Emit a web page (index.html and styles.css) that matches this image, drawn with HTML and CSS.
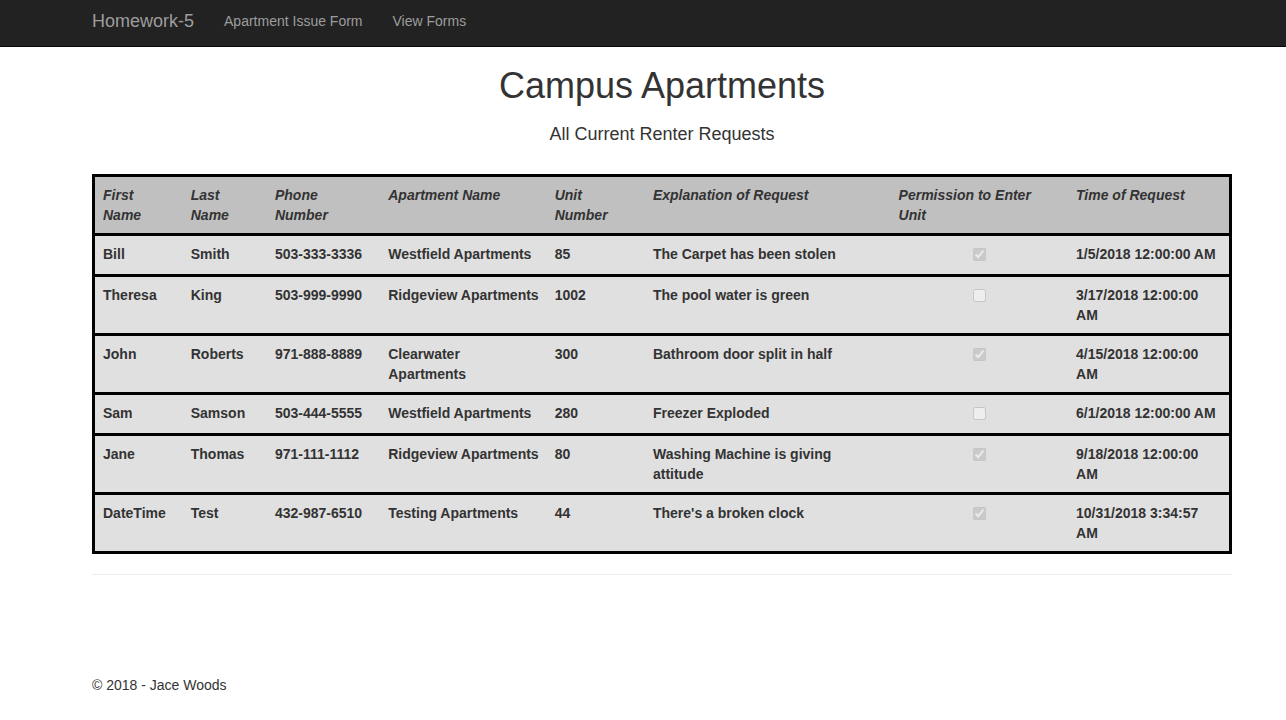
FILE: index.html
```html
<!DOCTYPE html>
<html>
<head>
<meta charset="utf-8">
<title>Campus Apartments</title>
<link rel="stylesheet" href="styles.css">
</head>
<body>
<nav class="navbar">
  <div class="container nav-inner">
    <a class="brand" href="#">Homework-5</a>
    <ul class="nav-links">
      <li><a href="#">Apartment Issue Form</a></li>
      <li><a href="#">View Forms</a></li>
    </ul>
  </div>
</nav>
<main class="container body-content">
  <h1 class="title">Campus Apartments</h1>
  <h4 class="subtitle">All Current Renter Requests</h4>
  <table class="requests">
    <colgroup>
      <col class="c1"><col class="c2"><col class="c3"><col class="c4"><col class="c5"><col class="c6"><col class="c7"><col class="c8">
    </colgroup>
    <thead>
      <tr>
        <th>First Name</th><th>Last Name</th><th>Phone Number</th><th>Apartment Name</th><th>Unit Number</th><th>Explanation of Request</th><th>Permission to Enter Unit</th><th>Time of Request</th>
      </tr>
    </thead>
    <tbody>
      <tr><td>Bill</td><td>Smith</td><td>503-333-3336</td><td>Westfield Apartments</td><td>85</td><td>The Carpet has been stolen</td><td class="chk"><input type="checkbox" checked disabled></td><td>1/5/2018 12:00:00 AM</td></tr>
      <tr><td>Theresa</td><td>King</td><td>503-999-9990</td><td>Ridgeview Apartments</td><td>1002</td><td>The pool water is green</td><td class="chk"><input type="checkbox" disabled></td><td>3/17/2018 12:00:00 AM</td></tr>
      <tr><td>John</td><td>Roberts</td><td>971-888-8889</td><td>Clearwater Apartments</td><td>300</td><td>Bathroom door split in half</td><td class="chk"><input type="checkbox" checked disabled></td><td>4/15/2018 12:00:00 AM</td></tr>
      <tr><td>Sam</td><td>Samson</td><td>503-444-5555</td><td>Westfield Apartments</td><td>280</td><td>Freezer Exploded</td><td class="chk"><input type="checkbox" disabled></td><td>6/1/2018 12:00:00 AM</td></tr>
      <tr><td>Jane</td><td>Thomas</td><td>971-111-1112</td><td>Ridgeview Apartments</td><td>80</td><td>Washing Machine is giving attitude</td><td class="chk"><input type="checkbox" checked disabled></td><td>9/18/2018 12:00:00 AM</td></tr>
      <tr><td>DateTime</td><td>Test</td><td>432-987-6510</td><td>Testing Apartments</td><td>44</td><td>There's a broken clock</td><td class="chk"><input type="checkbox" checked disabled></td><td>10/31/2018 3:34:57 AM</td></tr>
    </tbody>
  </table>
  <hr class="rule">
  <footer class="footer">
    <p>&copy; 2018 - Jace Woods</p>
  </footer>
</main>
</body>
</html>
```

FILE: styles.css
```css
* { box-sizing: border-box; }
html, body { margin: 0; padding: 0; }
body {
  font-family: "Liberation Sans", Arial, Helvetica, sans-serif;
  font-size: 14px;
  line-height: 20px;
  color: #333;
  background: #fff;
  padding-top: 48px;
}
.container {
  width: 1170px;
  padding: 0 15px;
  margin-left: 77px;
}
.navbar {
  position: fixed;
  top: 0; left: 0; right: 0;
  height: 47px;
  background: #222;
  border-bottom: 1px solid #080808;
}
.nav-inner {
  display: flex;
  align-items: flex-start;
  height: 46px;
}
.brand {
  color: #9d9d9d;
  font-size: 18px;
  line-height: 20px;
  text-decoration: none;
  padding: 11px 15px 15px 0;
}
.nav-links {
  display: flex;
  list-style: none;
  margin: 0;
  padding: 0;
}
.nav-links a {
  display: block;
  color: #9d9d9d;
  text-decoration: none;
  padding: 11px 15px 15px;
  line-height: 20px;
}
.title {
  text-align: center;
  font-size: 36px;
  font-weight: 400;
  line-height: 40px;
  margin: 18px 0 0;
  color: #333;
}
.subtitle {
  text-align: center;
  font-size: 18px;
  font-weight: 400;
  line-height: 20px;
  margin: 18px 0 0;
}
.requests {
  width: 1140px;
  margin-top: 30px;
  border-collapse: collapse;
  table-layout: fixed;
  border: 3px solid #000;
}
.c1 { width: 89px; }
.c2 { width: 84px; }
.c3 { width: 113px; }
.c4 { width: 166px; }
.c5 { width: 98px; }
.c6 { width: 245px; }
.c7 { width: 177px; }
.c8 { width: 162px; }
.requests th, .requests td {
  padding: 8px;
  text-align: left;
  vertical-align: top;
  font-weight: 700;
  line-height: 20px;
}
.requests th {
  background: #c0c0c0;
  font-style: italic;
}
.requests td {
  background: #e0e0e0;
}
.requests tbody tr {
  border-top: 3px solid #000;
}
.requests td.chk input {
  display: block;
  margin: 4px auto 5px;
  width: 13px;
  height: 13px;
}
.rule {
  margin: 20px 0 0;
  border: 0;
  border-top: 1px solid #eee;
}
.footer p {
  margin: 100px 0 0;
}
```
